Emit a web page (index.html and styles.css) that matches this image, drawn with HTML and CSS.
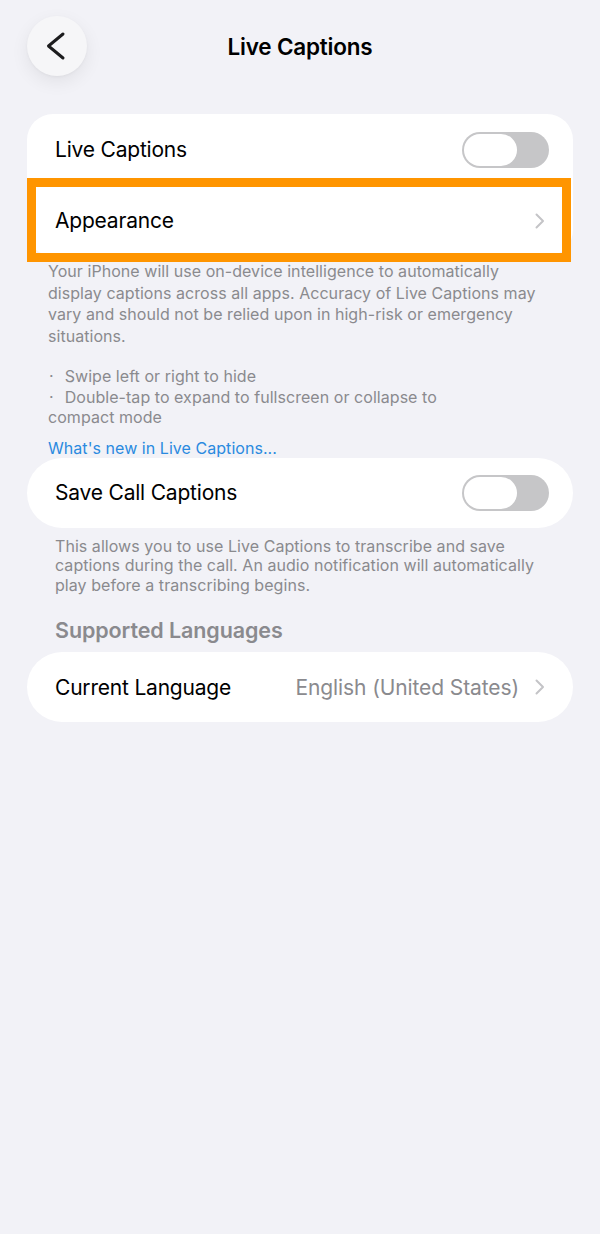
FILE: index.html
```html
<!DOCTYPE html>
<html lang="en">
<head>
<meta charset="utf-8">
<title>Live Captions</title>
<link rel="stylesheet" href="styles.css">
</head>
<body>
<div class="screen">
  <header class="nav">
    <button class="back" aria-label="Back">
      <svg width="60" height="60" viewBox="0 0 60 60"><path d="M36 18 L21.5 30 L36 42" fill="none" stroke="#1c1c1e" stroke-width="3" stroke-linecap="round" stroke-linejoin="round"/></svg>
    </button>
    <h1 class="title">Live Captions</h1>
  </header>

  <section class="card card-top">
    <div class="row">
      <span class="label">Live Captions</span>
      <span class="toggle"><span class="knob"></span></span>
    </div>
    <div class="row row-highlight">
      <span class="label">Appearance</span>
      <svg class="chev" width="10" height="16" viewBox="0 0 10 16"><path d="M1.5 1.5 L8 8 L1.5 14.5" fill="none" stroke="#c4c4c7" stroke-width="2" stroke-linecap="round" stroke-linejoin="round"/></svg>
      <span class="highlight"></span>
    </div>
  </section>

  <div class="footer footer-main">
    <p class="para">Your iPhone will use on-device intelligence to automatically display captions across all apps. Accuracy of Live Captions may vary and should not be relied upon in high-risk or emergency situations.</p>
    <ul class="bullets">
      <li>Swipe left or right to hide</li>
      <li>Double-tap to expand to fullscreen or collapse to compact mode</li>
    </ul>
    <a class="link" href="#">What's new in Live Captions...</a>
  </div>

  <section class="card card-pill">
    <div class="row">
      <span class="label">Save Call Captions</span>
      <span class="toggle"><span class="knob"></span></span>
    </div>
  </section>

  <p class="footer footer-call">This allows you to use Live Captions to transcribe and save captions during the call. An audio notification will automatically play before a transcribing begins.</p>

  <h2 class="section-head">Supported Languages</h2>

  <section class="card card-pill">
    <div class="row">
      <span class="label">Current Language</span>
      <span class="value">English (United States)</span>
      <svg class="chev" width="10" height="16" viewBox="0 0 10 16"><path d="M1.5 1.5 L8 8 L1.5 14.5" fill="none" stroke="#c4c4c7" stroke-width="2" stroke-linecap="round" stroke-linejoin="round"/></svg>
    </div>
  </section>
</div>
</body>
</html>
```

FILE: styles.css
```css
* { box-sizing: border-box; }

html, body {
  margin: 0;
  padding: 0;
  background: #f2f2f7;
}

body {
  font-family: Inter, "Noto Sans", "Liberation Sans", sans-serif;
  color: #000;
  -webkit-font-smoothing: antialiased;
}

.screen {
  width: 600px;
  min-height: 1234px;
  padding: 16px 27px 0 27px;
}

.nav {
  position: relative;
  height: 60px;
  display: flex;
  align-items: center;
  justify-content: center;
}

.back {
  position: absolute;
  left: 0;
  top: 0;
  width: 60px;
  height: 60px;
  padding: 0;
  border: none;
  border-radius: 50%;
  background: #f6f6f8;
  box-shadow: 0 6px 18px rgba(0, 0, 0, 0.07), 0 1px 3px rgba(0, 0, 0, 0.04);
  display: flex;
}

.title {
  margin: 0;
  font-size: 22.5px;
  font-weight: 600;
  letter-spacing: -0.2px;
  color: #000;
}

.card {
  background: #fff;
  overflow: visible;
}

.card-top {
  margin-top: 38px;
  border-radius: 26px;
}

.card-pill {
  border-radius: 35px;
}

.row {
  position: relative;
  height: 71px;
  display: flex;
  align-items: center;
  padding: 0 24px 0 28px;
}

.card-pill .row {
  height: 70px;
}

.label {
  flex: 1;
  font-size: 21px;
  letter-spacing: -0.2px;
  color: #000;
}

.value {
  font-size: 21px;
  letter-spacing: -0.1px;
  color: #8a8a8e;
  margin-right: 16px;
}

.chev {
  flex: none;
  margin-right: 4px;
}

.toggle {
  flex: none;
  position: relative;
  width: 87px;
  height: 36px;
  border-radius: 18px;
  background: #c6c6c8;
  padding: 2px;
  display: flex;
}

.knob {
  width: 53px;
  height: 32px;
  border-radius: 16px;
  background: #fff;
}

.highlight {
  position: absolute;
  left: 0;
  right: 2px;
  top: -7px;
  bottom: -6px;
  border: 9px solid #ff9500;
  pointer-events: none;
}

.footer {
  color: #8a8a8e;
  font-size: 16px;
  letter-spacing: 0.05px;
}

.footer-main {
  padding: 5px 20px 0 21px;
}

.para {
  margin: 0;
  line-height: 21.5px;
}

.bullets {
  list-style: none;
  margin: 19px 0 0 0;
  padding: 0 70px 0 0;
  line-height: 20.5px;
}

.bullets li {
  margin: 0;
}

.bullets li::before {
  content: "\00B7";
  margin-left: 1px;
  margin-right: 11px;
}

.link {
  display: block;
  margin-top: 10px;
  color: #2a8ae0;
  text-decoration: none;
  line-height: 20px;
}

.footer-call {
  margin: 9px 0 0 0;
  padding: 0 20px 0 28px;
  line-height: 19.5px;
}

.section-head {
  margin: 23px 0 10px 0;
  padding-left: 28px;
  font-size: 21.5px;
  font-weight: 600;
  line-height: 24px;
  letter-spacing: -0.1px;
  color: #8a8a8e;
}
```
